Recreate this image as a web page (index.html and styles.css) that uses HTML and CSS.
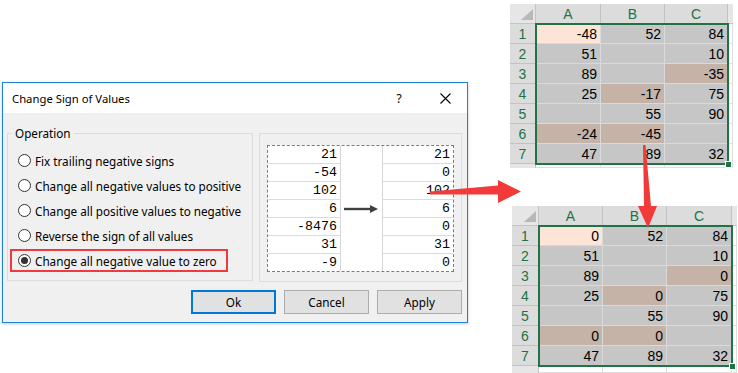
FILE: index.html
```html
<!DOCTYPE html>
<html>
<head>
<meta charset="utf-8">
<link rel="stylesheet" href="styles.css">
</head>
<body>
<div class="page">
  <div class="left">
    <div class="dialog">
      <div class="titlebar">
        <span class="title">Change Sign of Values</span>
        <span class="help">?</span>
        <span class="close"><svg width="11" height="11" viewBox="0 0 11 11"><path d="M0.5 0.5L10.5 10.5M10.5 0.5L0.5 10.5" stroke="#000" stroke-width="1.1" fill="none"/></svg></span>
      </div>
      <div class="dbody">
        <div class="panels">
          <fieldset class="group">
            <legend>Operation</legend>
            <div class="opt"><span class="radio"></span>Fix trailing negative signs</div>
            <div class="opt"><span class="radio"></span>Change all negative values to positive</div>
            <div class="opt"><span class="radio"></span>Change all positive values to negative</div>
            <div class="opt"><span class="radio"></span>Reverse the sign of all values</div>
            <div class="opt sel"><span class="radio on"></span>Change all negative value to zero</div>
          </fieldset>
          <div class="preview">
            <div class="ptable">
              <div class="pcol c1">
                <div class="pc">21</div><div class="pc">-54</div><div class="pc">102</div><div class="pc">6</div><div class="pc">-8476</div><div class="pc">31</div><div class="pc">-9</div>
              </div>
              <div class="pmid">
                <svg width="41" height="12" viewBox="0 0 41 12"><path d="M3 6H31" stroke="#404040" stroke-width="2.4"/><path d="M29 2L37 6L29 10Z" fill="#404040"/></svg>
              </div>
              <div class="pcol c3">
                <div class="pc">21</div><div class="pc">0</div><div class="pc">102</div><div class="pc">6</div><div class="pc">0</div><div class="pc">31</div><div class="pc">0</div>
              </div>
            </div>
          </div>
        </div>
        <div class="buttons">
          <div class="btn default">Ok</div>
          <div class="btn">Cancel</div>
          <div class="btn">Apply</div>
        </div>
      </div>
    </div>
  </div>

  <div class="right">
    <div class="sheet top">
      <div class="corner"><svg width="12" height="11" viewBox="0 0 12 11"><path d="M12 0V11H0Z" fill="#b8b8b8"/></svg></div>
      <div class="ch">A</div><div class="ch">B</div><div class="ch">C</div><div class="chp"></div>
      <div class="rh">1</div><div class="c lt">-48</div><div class="c">52</div><div class="c">84</div><div class="e"></div>
      <div class="rh">2</div><div class="c">51</div><div class="c"></div><div class="c">10</div><div class="e"></div>
      <div class="rh">3</div><div class="c">89</div><div class="c"></div><div class="c pk">-35</div><div class="e"></div>
      <div class="rh">4</div><div class="c">25</div><div class="c pk">-17</div><div class="c">75</div><div class="e"></div>
      <div class="rh">5</div><div class="c"></div><div class="c">55</div><div class="c">90</div><div class="e"></div>
      <div class="rh">6</div><div class="c pk">-24</div><div class="c pk">-45</div><div class="c"></div><div class="e"></div>
      <div class="rh">7</div><div class="c">47</div><div class="c">89</div><div class="c">32</div><div class="e"></div>
      <div class="rhp"></div><div class="e"></div><div class="e"></div><div class="e"></div><div class="e"></div>
      <div class="selbox"><span class="handle"></span></div>
    </div>

    <div class="sheet bottom">
      <div class="corner"><svg width="12" height="11" viewBox="0 0 12 11"><path d="M12 0V11H0Z" fill="#b8b8b8"/></svg></div>
      <div class="ch">A</div><div class="ch">B</div><div class="ch">C</div><div class="chp"></div>
      <div class="rh">1</div><div class="c lt">0</div><div class="c">52</div><div class="c">84</div><div class="e"></div>
      <div class="rh">2</div><div class="c">51</div><div class="c"></div><div class="c">10</div><div class="e"></div>
      <div class="rh">3</div><div class="c">89</div><div class="c"></div><div class="c pk">0</div><div class="e"></div>
      <div class="rh">4</div><div class="c">25</div><div class="c pk">0</div><div class="c">75</div><div class="e"></div>
      <div class="rh">5</div><div class="c"></div><div class="c">55</div><div class="c">90</div><div class="e"></div>
      <div class="rh">6</div><div class="c pk">0</div><div class="c pk">0</div><div class="c"></div><div class="e"></div>
      <div class="rh">7</div><div class="c">47</div><div class="c">89</div><div class="c">32</div><div class="e"></div>
      <div class="rhp"></div><div class="e"></div><div class="e"></div><div class="e"></div><div class="e"></div>
      <div class="selbox"><span class="handle"></span></div>
    </div>
  </div>

  <svg class="arrows" width="738" height="373" viewBox="0 0 738 373">
    <path d="M430 191.5L498 185.5L498 180L521 191.5L498 203L498 194.5L430 194.5Z" fill="#f23a3a"/>
    <path d="M643 145L645.5 145L651 206L657 206L648 228L638 206L644 206Z" fill="#f23a3a"/>
  </svg>
</div>
</body>
</html>
```

FILE: styles.css
```css
* { box-sizing: border-box; }
html, body { margin: 0; padding: 0; background: #fff; }

.page {
  position: relative;
  width: 738px;
  height: 373px;
  display: flex;
  overflow: hidden;
  font-family: "Noto Sans", "Liberation Sans", sans-serif;
  color: #000;
}

/* ---------- dialog ---------- */
.left { width: 470px; flex: none; padding: 82px 2px 0 2px; }

.dialog {
  width: 466px;
  height: 241px;
  border: 1px solid #1883d7;
  background: #f0f0f0;
  display: flex;
  flex-direction: column;
  box-shadow: 0 1px 3px rgba(0, 0, 0, 0.22);
}

.titlebar {
  height: 30px;
  flex: none;
  background: #fff;
  display: flex;
  align-items: center;
  padding: 0 16px 0 9px;
  font-size: 11.3px;
}
.title { flex: 1; }
.help { width: 14px; text-align: center; font-size: 12px; margin-right: 34px; }
.close { width: 11px; height: 11px; display: flex; }

.dbody { flex: 1; display: flex; flex-direction: column; padding: 0 5px 8px 4px; }

.panels { display: flex; align-items: flex-start; gap: 6px; margin-top: 12px; }

.group {
  margin: 0;
  width: 246px;
  min-width: 0;
  padding: 8px 0 8px 2px;
  border: 1px solid #dcdcdc;
}
.group legend {
  font-size: 11.7px;
  line-height: 16px;
  padding: 0 3px;
  margin-left: 2px;
}

.opt {
  display: flex;
  align-items: center;
  gap: 4px;
  width: 218px;
  height: 23px;
  border: 2px solid transparent;
  padding-left: 6px;
  font-size: 11.7px;
  white-space: nowrap;
}
.opt + .opt { margin-top: 2px; }
.opt.sel { border-color: #ef3b3f; }

.radio {
  width: 13px;
  height: 13px;
  flex: none;
  border: 1px solid #333;
  border-radius: 50%;
  background: #fff;
  display: flex;
  align-items: center;
  justify-content: center;
}
.radio.on::after {
  content: "";
  width: 7px;
  height: 7px;
  border-radius: 50%;
  background: #333;
}

.preview {
  width: 203px;
  height: 149px;
  margin-top: 8px;
  border: 1px solid #dcdcdc;
  padding: 11px 0 0 7px;
}
.ptable {
  display: flex;
  width: 187px;
  height: 127px;
  border: 1px dashed #7b7b7b;
  background: #fff;
}
.pcol { display: flex; flex-direction: column; }
.pcol.c1 { width: 73px; border-right: 1px solid #d6d6d6; }
.pcol.c3 { width: 70px; }
.pc {
  height: 18px;
  flex: none;
  border-bottom: 1px solid #dcdcdc;
  text-align: right;
  padding-right: 3px;
  font-family: "Liberation Mono", "DejaVu Sans Mono", monospace;
  font-size: 13.3px;
  line-height: 18px;
}
.pc:last-child { border-bottom: none; height: 17px; }
.pmid {
  width: 42px;
  border-right: 1px solid #d6d6d6;
  display: flex;
  align-items: center;
}

.buttons { display: flex; justify-content: flex-end; gap: 8px; margin-top: 8px; }
.btn {
  width: 85px;
  height: 24px;
  background: #e1e1e1;
  border: 1px solid #adadad;
  font-size: 11.7px;
  display: flex;
  align-items: center;
  justify-content: center;
}
.btn.default { border: 2px solid #0078d7; }

/* ---------- sheets ---------- */
.right { flex: 1; display: flex; flex-direction: column; }

.sheet {
  position: relative;
  display: grid;
  font-family: "Liberation Sans", Arial, sans-serif;
  font-size: 14px;
}
.sheet.top {
  margin: 4px 0 0 40px;
  grid-template-columns: 26px 65px 64px 63px 5px;
  grid-template-rows: 20px repeat(7, 20px) 4px;
}
.sheet.bottom {
  margin: 38px 0 0 42px;
  grid-template-columns: 27px 64px 64px 65px 5px;
  grid-template-rows: 20px repeat(7, 20px) 7px;
}

.corner {
  background: #e6e6e6;
  border-right: 1px solid #c4c4c4;
  border-bottom: 1px solid #c4c4c4;
  display: flex;
  align-items: flex-end;
  justify-content: flex-end;
  padding: 0 2px 3px 0;
}
.ch, .rh {
  background: #dcdcdc;
  color: #217346;
  border-right: 1px solid #c2c2c2;
  border-bottom: 1px solid #c2c2c2;
  display: flex;
  align-items: center;
  justify-content: center;
  line-height: 1;
}
.chp { background: #e6e6e6; border-bottom: 1px solid #c4c4c4; }
.rhp { background: #e6e6e6; border-right: 1px solid #c4c4c4; }

.c {
  background: #c6c6c6;
  border-right: 1px solid #dadada;
  border-bottom: 1px solid #dadada;
  display: flex;
  align-items: center;
  justify-content: flex-end;
  padding-right: 3px;
  line-height: 1;
}
.c.pk { background: #c5b3a8; }
.c.lt { background: #fce4d6; }
.e { background: #fff; border-right: 1px solid #dedede; border-bottom: 1px solid #dedede; }

.selbox {
  position: absolute;
  top: 19px;
  height: 142px;
  border: 2px solid #217346;
}
.top .selbox { left: 25px; width: 194px; }
.bottom .selbox { left: 26px; width: 195px; }
.handle {
  position: absolute;
  right: -5px;
  bottom: -5px;
  width: 7px;
  height: 7px;
  background: #217346;
  border: 1px solid #fff;
}

.arrows { position: absolute; left: 0; top: 0; pointer-events: none; }
```
